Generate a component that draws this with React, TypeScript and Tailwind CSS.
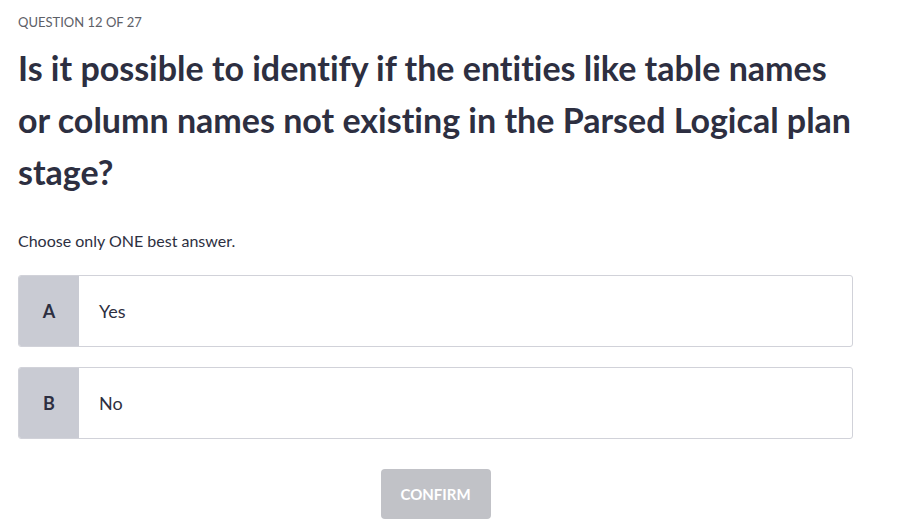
import React from "react";

const font = { fontFamily: "Lato, 'Noto Sans', sans-serif" };

function Option({ letter, text }: { letter: string; text: string }) {
  return (
    <div className="flex h-[72px] w-[835px] rounded-[3px] border border-[#d1d2d9] bg-white overflow-hidden">
      <div className="flex w-[60px] items-center justify-center bg-[#c9cbd3] text-[18px] font-bold text-[#2d2f41]">
        {letter}
      </div>
      <div className="flex items-center pl-5 text-[18px] text-[#2d2f41]">{text}</div>
    </div>
  );
}

export default function App() {
  return (
    <div className="min-h-[522px] w-[907px] bg-white px-[18px] pt-[14px] [font-variant-ligatures:none]" style={font}>
      <div className="text-[13px] leading-[16px] text-[#5d6067]">QUESTION 12 OF 27</div>
      <h1 className="mt-[12px] w-[835px] text-[34px] font-bold leading-[52px] text-[#2d2f41]">
        Is it possible to identify if the entities like table names or column names not existing in the Parsed Logical plan stage?
      </h1>
      <div className="mt-[33px] text-[16px] leading-[20px] text-[#2d2f41]">Choose only ONE best answer.</div>
      <div className="mt-[24px] flex flex-col gap-[20px]">
        <Option letter="A" text="Yes" />
        <Option letter="B" text="No" />
      </div>
      <div className="mt-[30px] flex w-[835px] justify-center">
        <button className="h-[50px] w-[110px] rounded-[4px] bg-[#c1c2c7] text-[15px] font-bold text-white">
          CONFIRM
        </button>
      </div>
    </div>
  );
}
